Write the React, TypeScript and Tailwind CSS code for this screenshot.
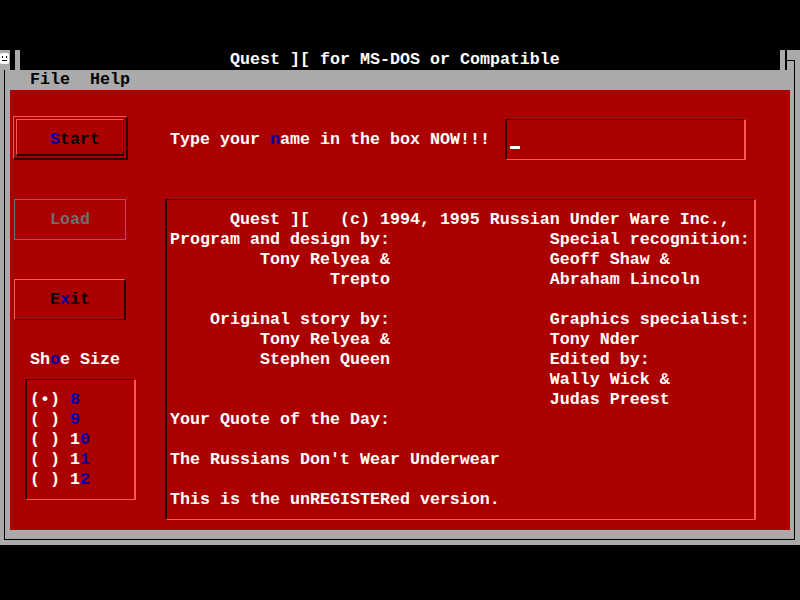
const mono = "font-['Liberation_Mono','DejaVu_Sans_Mono',monospace] text-[16.67px] leading-[20px] font-bold";

const pad = (left: string, right = '') => (right ? left.padEnd(38, ' ') + right : left);

const infoLines: string[] = [
  '      Quest ][   (c) 1994, 1995 Russian Under Ware Inc.,',
  pad('Program and design by:', 'Special recognition:'),
  pad('         Tony Relyea &', 'Geoff Shaw &'),
  pad('                Trepto', 'Abraham Lincoln'),
  '',
  pad('    Original story by:', 'Graphics specialist:'),
  pad('         Tony Relyea &', 'Tony Nder'),
  pad('         Stephen Queen', 'Edited by:'),
  pad('', 'Wally Wick &'),
  pad('', 'Judas Preest'),
  'Your Quote of the Day:',
  '',
  "The Russians Don't Wear Underwear",
  '',
  'This is the unREGISTERed version.',
];

const sizes = [
  { mark: '•', lead: '', key: '8' },
  { mark: ' ', lead: '', key: '9' },
  { mark: ' ', lead: '1', key: '0' },
  { mark: ' ', lead: '1', key: '1' },
  { mark: ' ', lead: '1', key: '2' },
];

function SystemIcon() {
  return (
    <svg width="10" height="20" viewBox="0 0 10 20">
      <rect x="0" y="3" width="9" height="11" rx="2" fill="#ffffff" />
      <rect x="2" y="6" width="1" height="2" fill="#000000" />
      <rect x="6" y="6" width="1" height="2" fill="#000000" />
      <rect x="2" y="10" width="5" height="1" fill="#000000" />
    </svg>
  );
}

function TitleBar() {
  return (
    <div className="flex h-[20px]">
      <div className="w-[10px] bg-[#aaaaaa]">
        <SystemIcon />
      </div>
      <div className="w-[5px] bg-black" />
      <div className="w-[5px] bg-[#aaaaaa]" />
      <div className={`${mono} w-[760px] whitespace-pre bg-black pl-[210px] text-white`}>
        Quest ][ for MS-DOS or Compatible
      </div>
      <div className="w-[5px] bg-[#aaaaaa]" />
      <div className="w-[2px] bg-black" />
      <div className="flex-1 bg-[#aaaaaa] pt-[10px]">
        <div className="h-[10px] w-[8px] border-t border-r border-black" />
      </div>
    </div>
  );
}

function LeftColumn() {
  return (
    <div className="flex w-[155px] shrink-0 flex-col">
      {/* Start: default button, double frame */}
      <div className="ml-[3px] mt-[26px] h-[44px] w-[115px] border-t border-l border-r-2 border-b-2 border-t-[#ff5555] border-l-[#ff5555] border-r-[#2a0000] border-b-[#2a0000] p-[2px]">
        <div className={`${mono} h-full w-full whitespace-pre border-t border-l border-r border-b-2 border-t-[#ff5555] border-l-[#ff5555] border-r-[#2a0000] border-b-[#2a0000] pl-[33px] pt-[10px] text-black`}>
          <span className="text-[#0000aa]">S</span>tart
        </div>
      </div>

      <div className={`${mono} ml-[4px] mt-[39px] h-[41px] w-[112px] border border-[#707070] pl-[35px] pt-[10px] text-[#6e6e6e]`}>
        Load
      </div>

      <div className={`${mono} ml-[4px] mt-[39px] h-[41px] w-[112px] border-t border-l border-r-2 border-b border-t-[#ff5555] border-l-[#ff5555] border-r-[#2a0000] border-b-[#2a0000] pl-[35px] pt-[10px] text-black`}>
        E<span className="text-[#0000aa]">x</span>it
      </div>

      <div className={`${mono} ml-[20px] mt-[30px] whitespace-pre text-white`}>
        Sh<span className="text-[#0000aa]">o</span>e Size
      </div>

      <div className={`${mono} ml-[15px] mt-[9px] h-[121px] w-[111px] border-t border-l-2 border-r-2 border-b border-t-[#2a0000] border-l-[#2a0000] border-r-[#ff5555] border-b-[#ff5555] pl-[3px] pt-[10px] text-white`}>
        {sizes.map((s) => (
          <div key={s.lead + s.key} className="h-[20px] whitespace-pre">
            ({s.mark}) {s.lead}
            <span className="text-[#0000aa]">{s.key}</span>
          </div>
        ))}
      </div>
    </div>
  );
}

function RightColumn() {
  return (
    <div className="flex flex-1 flex-col">
      <div className="mt-[29px] flex items-start">
        <div className={`${mono} ml-[5px] mt-[11px] w-[320px] whitespace-pre text-white`}>
          Type your <span className="text-[#0000aa]">n</span>ame in the box NOW!!!
        </div>
        <div className="ml-[15px] h-[41px] w-[241px] border-t border-l-2 border-r-2 border-b border-t-[#2a0000] border-l-[#2a0000] border-r-[#ff5555] border-b-[#ff5555] pl-[3px] pt-[26px]">
          <div className="h-[3px] w-[10px] bg-white" />
        </div>
      </div>

      <div className={`${mono} mt-[39px] h-[321px] w-[591px] border-t border-l-2 border-r-2 border-b border-t-[#2a0000] border-l-[#2a0000] border-r-[#ff5555] border-b-[#ff5555] pl-[3px] pt-[10px] text-white`}>
        {infoLines.map((line, i) => (
          <div key={i} className="h-[20px] whitespace-pre">
            {line}
          </div>
        ))}
      </div>
    </div>
  );
}

export default function App() {
  return (
    <div className="h-[600px] w-[800px] overflow-hidden bg-black">
      <div className="h-[50px]" />
      <TitleBar />
      <div className="h-[475px] bg-[#aaaaaa]">
        <div className="ml-[4px] mr-[5px] h-[470px] border-l border-r border-b border-black pl-[5px] pr-[4px]">
          <div className={`${mono} h-[20px] whitespace-pre pl-[20px] text-black`}>File  Help</div>
          <div className="flex h-[440px] bg-[#aa0000]">
            <LeftColumn />
            <RightColumn />
          </div>
        </div>
      </div>
    </div>
  );
}
